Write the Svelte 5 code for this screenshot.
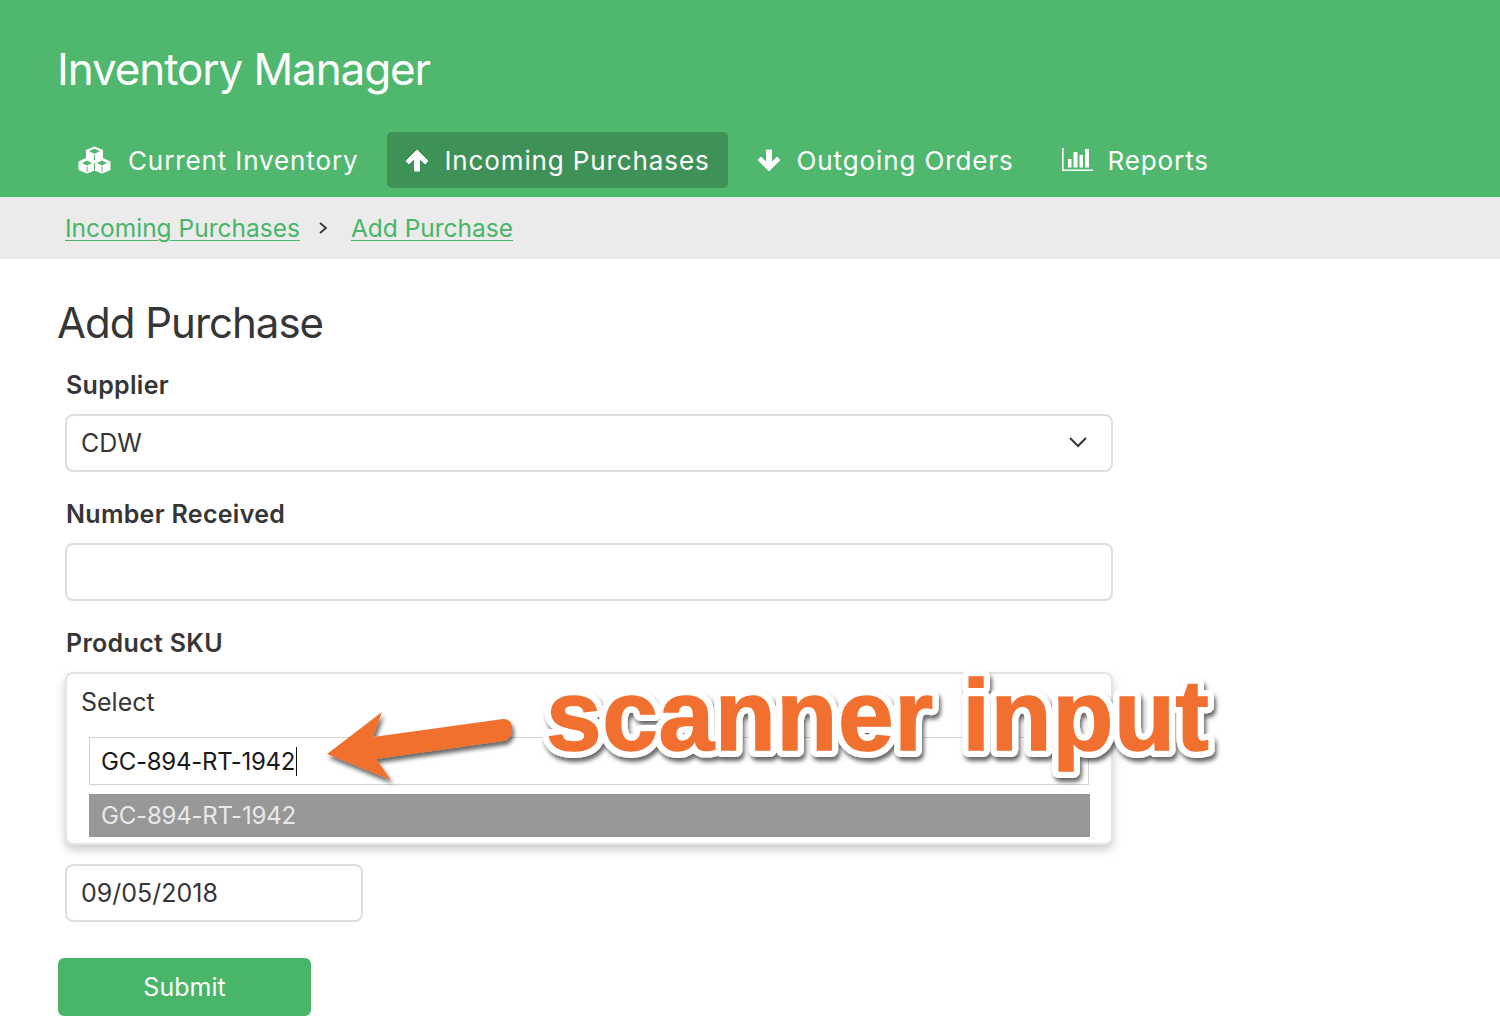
<script>
    const navItems = [
        { label: "Current Inventory", icon: "cubes" },
        { label: "Incoming Purchases", icon: "up", active: true },
        { label: "Outgoing Orders", icon: "down" },
        { label: "Reports", icon: "chart" }
    ];
    const sku = "GC-894-RT-1942";
</script>

<header class="top">
    <h1 class="brand">Inventory Manager</h1>
    <nav class="tabs">
        {#each navItems as item}
            <div class="tab" class:active={item.active}>
                {#if item.icon === "cubes"}
                    <svg class="nav-icon cubes" viewBox="0 0 33 28" aria-hidden="true">
                        <path d="M16.500 0.500 L25 4 L25 12 L32.500 15.500 L32.500 24 L24 27.500 L16.500 24.500 L9 27.500 L0.500 24 L0.500 15.500 L8 12 L8 4 Z" fill="#fff"/>
                        <g fill="#50b86e">
                            <path d="M16.500 2.600 L22 5.200 L16.500 7.800 L11 5.200 Z"/>
                            <path d="M9 14.600 L14 17 L9 19.400 L4 17 Z"/>
                            <path d="M24 14.600 L29 17 L24 19.400 L19 17 Z"/>
                        </g>
                        <path d="M16.500 9 V14 M9 20.500 V26 M24 20.500 V26 M16.500 17 V24" fill="none" stroke="#50b86e" stroke-width="1"/>
                    </svg>
                {:else if item.icon === "up"}
                    <svg class="nav-icon arrow-icon up" viewBox="0 0 24 23" aria-hidden="true">
                        <path d="M12 1 L23 12 L20 15 L14.500 9.500 V22 H9.500 V9.500 L4 15 L1 12 Z" fill="#fff" stroke="#fff" stroke-linejoin="round"/>
                    </svg>
                {:else if item.icon === "down"}
                    <svg class="nav-icon arrow-icon" viewBox="0 0 24 23" aria-hidden="true">
                        <path d="M12 22 L23 11 L20 8 L14.500 13.500 V1 H9.500 V13.500 L4 8 L1 11 Z" fill="#fff" stroke="#fff" stroke-linejoin="round"/>
                    </svg>
                {:else}
                    <svg class="nav-icon chart" viewBox="0 0 31 24" aria-hidden="true">
                        <g fill="#fff">
                            <path d="M0 0 H1.600 V21.500 H31 V23 H0 Z"/>
                            <rect x="6" y="11" width="3.500" height="8.500"/>
                            <rect x="11.500" y="4" width="4" height="15.500"/>
                            <rect x="17.500" y="7" width="3.500" height="12.500"/>
                            <rect x="23" y="1" width="4" height="18.500"/>
                        </g>
                    </svg>
                {/if}
                <span>{item.label}</span>
            </div>
        {/each}
    </nav>
</header>

<div class="crumbs">
    <a href="#purchases">Incoming Purchases</a>
    <svg class="crumb-sep" viewBox="0 0 10 14" aria-hidden="true"><path d="M2 2 L8 7 L2 12" fill="none" stroke="#363636" stroke-width="1.800"/></svg>
    <a href="#add">Add Purchase</a>
</div>

<main class="page">
    <h2 class="title">Add Purchase</h2>

    <form class="form">
        <div class="field">
            <div class="label">Supplier</div>
            <div class="control select">
                <span>CDW</span>
                <svg class="chev" viewBox="0 0 20 12" aria-hidden="true"><path d="M2 2 L10 10 L18 2" fill="none" stroke="#363636" stroke-width="2"/></svg>
            </div>
        </div>

        <div class="field">
            <div class="label">Number Received</div>
            <div class="control"></div>
        </div>

        <div class="field sku">
            <div class="label">Product SKU</div>
            <div class="dropdown">
                <div class="dropdown-head">Select</div>
                <div class="search"><span>{sku}</span><i class="caret"></i></div>
                <div class="option">{sku}</div>
            </div>
        </div>

        <div class="control date">09/05/2018</div>

        <button class="submit" type="button">Submit</button>
    </form>
</main>

<!-- annotation drawn over the form -->
<svg class="note" viewBox="0 0 1500 1034">
    <defs>
        <filter id="soft" x="-10%" y="-20%" width="120%" height="150%">
            <feDropShadow dx="2" dy="4" stdDeviation="2" flood-color="#000" flood-opacity="0.6"/>
        </filter>
    </defs>
    <path class="arrow" d="M327 754 L382 712 L373 737 L503 719 Q513 719 512 730 Q512 739 503 741 L376 759 L391 780 Z" filter="url(#soft)"/>
    <text class="note-text halo" x="546" y="750" filter="url(#soft)">scanner input</text>
    <text class="note-text" x="546" y="750">scanner input</text>
</svg>

<style>
    :global(body) {
        margin: 0;
        background: #fff;
        font-family: Inter, "Open Sans", sans-serif;
        color: #363636;
    }
    .top {
        background: #50b86e;
        height: 197px;
        box-sizing: border-box;
        padding: 42px 0 0 57px;
        color: #fff;
    }
    .brand {
        margin: 0;
        font-size: 44px;
        line-height: 54px;
        font-weight: 400;
        letter-spacing: -1.1px;
    }
    .tabs {
        display: flex;
        margin: 36px 0 0 3px;
        gap: 11px;
    }
    .tab {
        display: flex;
        align-items: center;
        height: 56px;
        padding: 0 18px;
        border-radius: 5px;
        font-size: 26px;
        letter-spacing: 0.88px;
        color: #fff;
    }
    .tab.active {
        background: #3f9257;
    }
    .nav-icon {
        flex: none;
    }
    .cubes {
        width: 33px;
        height: 28px;
        margin-right: 17px;
    }
    .arrow-icon {
        width: 24px;
        height: 23px;
        margin-right: 16px;
    }
    .arrow-icon.up {
        margin-right: 15px;
    }
    .chart {
        width: 31px;
        height: 24px;
        margin: 0 15px 0 1px;
    }
    .crumbs {
        display: flex;
        align-items: center;
        height: 62px;
        box-sizing: border-box;
        padding-left: 65px;
        background: #ebebeb;
        font-size: 24.5px;
    }
    .crumbs a {
        color: #48b568;
        text-decoration: underline;
        text-underline-offset: 3px;
        text-decoration-thickness: 1px;
    }
    .crumb-sep {
        width: 10px;
        height: 14px;
        margin: 0 23px 0 18px;
    }
    .page {
        padding: 36px 0 0 58px;
    }
    .title {
        margin: 0 0 0 -1px;
        font-size: 42px;
        line-height: 56px;
        font-weight: 400;
        letter-spacing: -1px;
    }
    .form {
        width: 1055px;
        margin-top: 19px;
    }
    .field {
        margin-left: 7px;
        width: 1048px;
        margin-bottom: 27px;
    }
    .label {
        padding-left: 1px;
        font-size: 25px;
        line-height: 30px;
        font-weight: 600;
        letter-spacing: 0.3px;
        color: #363636;
        margin-bottom: 14px;
    }
    .control {
        box-sizing: border-box;
        height: 58px;
        border: 2px solid #dedede;
        border-radius: 8px;
        background: #fff;
        padding: 0 14px;
        display: flex;
        align-items: center;
        font-size: 25px;
    }
    .select {
        justify-content: space-between;
        padding-right: 23px;
    }
    .chev {
        width: 20px;
        height: 12px;
        margin-top: -2px;
    }
    .sku {
        margin-bottom: 19px;
    }
    .dropdown {
        box-sizing: border-box;
        height: 173px;
        border: 2px solid #e4e4e4;
        border-radius: 8px;
        background: #fff;
        box-shadow: 0 5px 10px rgba(0, 0, 0, 0.2);
        padding: 0 21px 0 22px;
    }
    .dropdown-head {
        height: 56px;
        margin: 0 -21px 0 -22px;
        padding-left: 14px;
        display: flex;
        align-items: center;
        font-size: 25px;
    }
    .search {
        box-sizing: border-box;
        height: 48px;
        border: 1px solid #d2d2d2;
        display: flex;
        align-items: center;
        padding-left: 11px;
        margin: 7px 1px 0 0;
        font-size: 24px;
        letter-spacing: -0.25px;
        color: #1a1a1a;
    }
    .caret {
        display: inline-block;
        width: 1px;
        height: 29px;
        margin-left: 1px;
        background: #111;
    }
    .option {
        height: 43px;
        margin-top: 9px;
        background: #989898;
        color: #e9e9e9;
        display: flex;
        align-items: center;
        padding-left: 12px;
        font-size: 24px;
        letter-spacing: -0.2px;
    }
    .date {
        width: 298px;
        margin-left: 7px;
    }
    .submit {
        display: block;
        width: 253px;
        height: 58px;
        margin-top: 36px;
        border: none;
        border-radius: 6px;
        background: #48b568;
        color: #fff;
        font-family: inherit;
        font-size: 25px;
    }
    .note {
        position: absolute;
        left: 0;
        top: 0;
        width: 1500px;
        height: 1034px;
        pointer-events: none;
    }
    .arrow {
        fill: #f2702f;
    }
    .note-text {
        font-family: "Liberation Sans", Arial, sans-serif;
        font-weight: 700;
        font-size: 100px;
        letter-spacing: 0.6px;
        fill: #f2702f;
        stroke: #f2702f;
        stroke-width: 1.5px;
    }
    .halo {
        fill: #fff;
        stroke: #fff;
        stroke-width: 14px;
        stroke-linejoin: round;
    }
</style>
